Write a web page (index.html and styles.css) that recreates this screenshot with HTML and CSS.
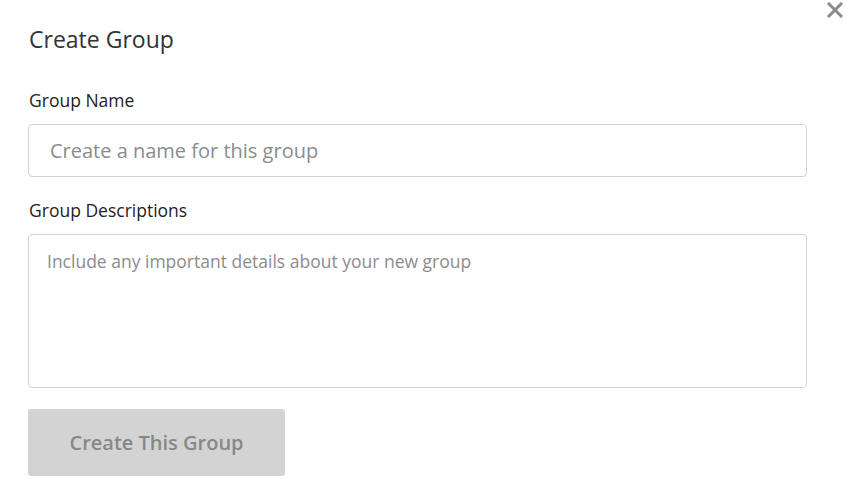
FILE: index.html
```html
<!DOCTYPE html>
<html>
<head>
<meta charset="utf-8">
<link rel="stylesheet" href="styles.css">
</head>
<body>
<div class="modal">
  <button class="close" aria-label="Close">
    <svg width="16" height="16" viewBox="0 0 16 16"><path d="M2 2 L14 14 M14 2 L2 14" stroke="#8a8a8a" stroke-width="3" stroke-linecap="square"/></svg>
  </button>
  <h1 class="title">Create Group</h1>
  <label class="label">Group Name</label>
  <input class="field" type="text" placeholder="Create a name for this group">
  <label class="label label-desc">Group Descriptions</label>
  <textarea class="area" placeholder="Include any important details about your new group"></textarea>
  <button class="submit" disabled>Create This Group</button>
</div>
</body>
</html>
```
FILE: styles.css
```css
* { box-sizing: border-box; }
html, body { margin: 0; padding: 0; background: #fff; }
body { font-family: "Open Sans", "Liberation Sans", sans-serif; color: #333; }
.modal {
  position: relative;
  width: 847px;
  height: 492px;
  padding: 23px 40px 0 28px;
  display: flex;
  flex-direction: column;
  align-items: flex-start;
}
.close {
  position: absolute;
  top: 1px;
  right: 3px;
  width: 18px;
  height: 18px;
  padding: 1px;
  border: 0;
  background: none;
}
.title {
  margin: 0 0 0 1px;
  font-size: 23px;
  font-weight: 400;
  line-height: 32px;
  color: #333;
}
.label {
  display: block;
  margin: 33px 0 0 1px;
  font-size: 17.5px;
  line-height: 24px;
  color: #222;
}
.label-desc { margin-top: 21px; }
.field {
  margin-top: 12px;
  width: 779px;
  height: 53px;
  border: 1px solid #d2d2d2;
  border-radius: 4px;
  padding: 0 21px;
  font-family: inherit;
  font-size: 20px;
  color: #333;
  outline: none;
}
.field::placeholder { color: #8c8c8c; }
.area {
  margin-top: 12px;
  width: 779px;
  height: 154px;
  border: 1px solid #d2d2d2;
  border-radius: 4px;
  padding: 13px 18px;
  font-family: inherit;
  font-size: 17.5px;
  line-height: 26px;
  resize: none;
  outline: none;
}
.area::placeholder { color: #8c8c8c; }
.submit {
  margin-top: 21px;
  width: 257px;
  height: 67px;
  border: 0;
  border-radius: 3px;
  background: #d3d3d3;
  color: #878787;
  font-family: inherit;
  font-size: 20px;
  font-weight: 600;
}
```
